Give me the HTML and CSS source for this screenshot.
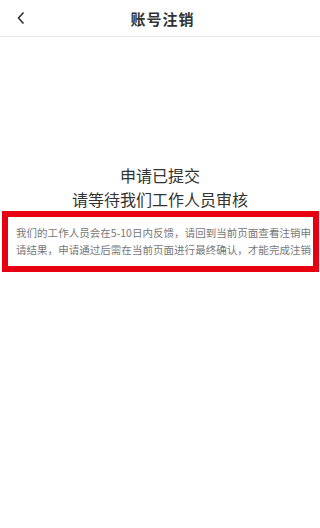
FILE: index.html
```html
<!DOCTYPE html>
<html lang="zh-CN">

<head>
    <meta charset="UTF-8">
    <meta name="viewport" content="width=device-width, initial-scale=1.0">
    <title>账号注销</title>
    <link rel="stylesheet" href="styles.css">
</head>

<body>
    <div class="page">
        <header class="nav">
            <span class="nav-back">
                <svg width="10" height="14" viewBox="0 0 10 14">
                    <polyline points="7.5,1.5 2.5,7 7.5,12.5" fill="none" stroke="#333" stroke-width="1.6" />
                </svg>
            </span>
            <span class="nav-title">账号注销</span>
        </header>
        <div class="result">
            <p class="result-title">申请已提交<br>请等待我们工作人员审核</p>
            <div class="result-note">
                <p>我们的工作人员会在5-10日内反馈，请回到当前页面查看注销申请结果，申请通过后需在当前页面进行最终确认，才能完成注销</p>
            </div>
        </div>
    </div>
</body>

</html>
```

FILE: styles.css
```css
:root {
  --color-text: #333;
  --color-muted: #777;
  --color-line: #ececec;
  --color-mark: #e60012;
}
body {
  margin: 0;
  padding: 0;
  background: #fff;
  font-family: "Noto Sans CJK SC", "Noto Sans", sans-serif;
  color: var(--color-text);
}
p {
  margin: 0;
}
.page {
  width: 320px;
  min-height: 528px;
}
.nav {
  height: 36px;
  display: flex;
  align-items: center;
  justify-content: center;
  position: relative;
  border-bottom: 1px solid var(--color-line);
}
.nav .nav-back {
  position: absolute;
  left: 16px;
  top: 11px;
  display: flex;
}
.nav .nav-title {
  font-size: 15px;
  font-weight: 700;
  letter-spacing: 1px;
  padding-left: 5px;
}
.result {
  padding-top: 126px;
}
.result .result-title {
  font-size: 16px;
  line-height: 24px;
  text-align: center;
}
.result .result-note {
  margin: 0 1px 0 2px;
  border: 6px solid var(--color-mark);
  padding: 7px 2px 8px 8px;
}
.result .result-note p {
  font-size: 10.5px;
  line-height: 17px;
  color: var(--color-muted);
  text-align: justify;
  text-align-last: justify;
}
```
